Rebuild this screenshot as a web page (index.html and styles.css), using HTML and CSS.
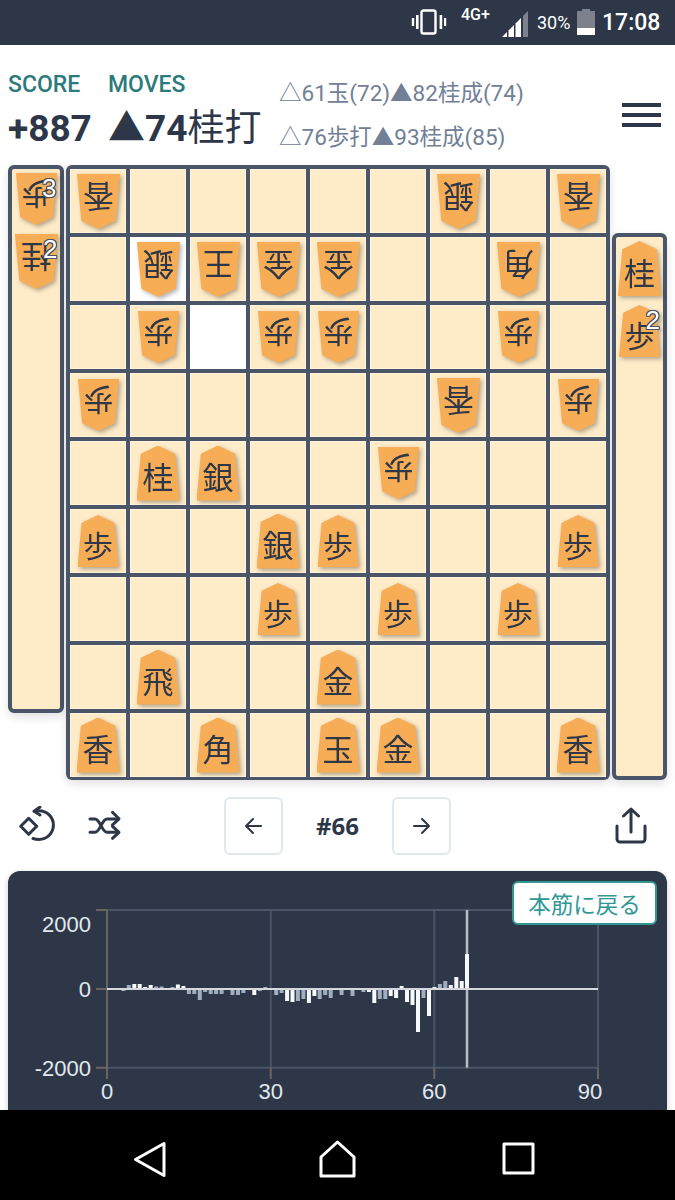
FILE: index.html
```html
<!DOCTYPE html>
<html>
  <head>
    <title>Shogi</title>
    <link rel="stylesheet" href="styles.css">
  </head>
  <body>
    <div class="status-bar">
      <svg class="status-vibrate" width="36" height="26" viewBox="0 0 36 26">
        <rect x="10.5" y="1.5" width="14" height="23" rx="2" fill="none" stroke="#fff" stroke-width="2.4"/>
        <rect x="5" y="6" width="2.6" height="14" fill="#fff"/>
        <rect x="0.8" y="9" width="2.4" height="8" fill="#fff"/>
        <rect x="28.6" y="6" width="2.6" height="14" fill="#fff"/>
        <rect x="33" y="9" width="2.2" height="8" fill="#fff"/>
      </svg>
      <span class="status-net">4G+</span>
      <svg class="status-signal" width="26" height="27" viewBox="0 0 26 27">
        <polygon points="0,27 5,27 5,22" fill="#fff"/>
        <polygon points="6.5,27 12,27 12,15 6.5,20.5" fill="#fff"/>
        <polygon points="13.5,27 19,27 19,8 13.5,13.5" fill="#fff"/>
        <polygon points="21,27 26,27 26,1 21,6" fill="#7c818d"/>
      </svg>
      <span class="status-battery-text">30%</span>
      <svg class="status-battery" width="18" height="26" viewBox="0 0 18 26">
        <rect x="5" y="0" width="8" height="3" fill="#7c818d"/>
        <rect x="0" y="2" width="18" height="17" fill="#7c818d"/>
        <rect x="0" y="19" width="18" height="7" fill="#fff"/>
      </svg>
      <span class="status-time">17:08</span>
    </div>

    <div class="main">
      <div class="header">
        <div class="score-col">
          <div class="label">SCORE</div>
          <div class="value">+887</div>
        </div>
        <div class="move-col">
          <div class="label">MOVES</div>
          <div class="value">▲74<span class="kanji">桂打</span></div>
        </div>
        <div class="lines">
          <div>△61玉(72)▲82桂成(74)</div>
          <div>△76歩打▲93桂成(85)</div>
        </div>
        <div class="menu">
          <div class="menu-bar"></div>
          <div class="menu-bar"></div>
          <div class="menu-bar"></div>
        </div>
      </div>

      <div class="board-row">
        <div class="stand stand-left">
          <div class="piece gote small"><span>歩</span><b class="count">3</b></div>
          <div class="piece gote"><span>桂</span><b class="count">2</b></div>
        </div>

        <div class="board">
          <div class="cell"><div class="piece gote"><span>香</span></div></div><div class="cell"></div><div class="cell"></div><div class="cell"></div><div class="cell"></div><div class="cell"></div><div class="cell"><div class="piece gote"><span>銀</span></div></div><div class="cell"></div><div class="cell"><div class="piece gote"><span>香</span></div></div>

          <div class="cell"></div><div class="cell white"><div class="piece gote"><span>銀</span></div></div><div class="cell"><div class="piece gote"><span>王</span></div></div><div class="cell"><div class="piece gote"><span>金</span></div></div><div class="cell"><div class="piece gote"><span>金</span></div></div><div class="cell"></div><div class="cell"></div><div class="cell"><div class="piece gote"><span>角</span></div></div><div class="cell"></div>

          <div class="cell"></div><div class="cell"><div class="piece gote small"><span>歩</span></div></div><div class="cell white"></div><div class="cell"><div class="piece gote small"><span>歩</span></div></div><div class="cell"><div class="piece gote small"><span>歩</span></div></div><div class="cell"></div><div class="cell"></div><div class="cell"><div class="piece gote small"><span>歩</span></div></div><div class="cell"></div>

          <div class="cell"><div class="piece gote small"><span>歩</span></div></div><div class="cell"></div><div class="cell"></div><div class="cell"></div><div class="cell"></div><div class="cell"></div><div class="cell"><div class="piece gote"><span>香</span></div></div><div class="cell"></div><div class="cell"><div class="piece gote small"><span>歩</span></div></div>

          <div class="cell"></div><div class="cell"><div class="piece"><span>桂</span></div></div><div class="cell"><div class="piece"><span>銀</span></div></div><div class="cell"></div><div class="cell"></div><div class="cell"><div class="piece gote small"><span>歩</span></div></div><div class="cell"></div><div class="cell"></div><div class="cell"></div>

          <div class="cell"><div class="piece small"><span>歩</span></div></div><div class="cell"></div><div class="cell"></div><div class="cell"><div class="piece"><span>銀</span></div></div><div class="cell"><div class="piece small"><span>歩</span></div></div><div class="cell"></div><div class="cell"></div><div class="cell"></div><div class="cell"><div class="piece small"><span>歩</span></div></div>

          <div class="cell"></div><div class="cell"></div><div class="cell"></div><div class="cell"><div class="piece small"><span>歩</span></div></div><div class="cell"></div><div class="cell"><div class="piece small"><span>歩</span></div></div><div class="cell"></div><div class="cell"><div class="piece small"><span>歩</span></div></div><div class="cell"></div>

          <div class="cell"></div><div class="cell"><div class="piece"><span>飛</span></div></div><div class="cell"></div><div class="cell"></div><div class="cell"><div class="piece"><span>金</span></div></div><div class="cell"></div><div class="cell"></div><div class="cell"></div><div class="cell"></div>

          <div class="cell"><div class="piece"><span>香</span></div></div><div class="cell"></div><div class="cell"><div class="piece"><span>角</span></div></div><div class="cell"></div><div class="cell"><div class="piece"><span>玉</span></div></div><div class="cell"><div class="piece"><span>金</span></div></div><div class="cell"></div><div class="cell"></div><div class="cell"><div class="piece"><span>香</span></div></div>
        </div>

        <div class="stand stand-right">
          <div class="piece"><span>桂</span></div>
          <div class="piece small"><span>歩</span><b class="count">2</b></div>
        </div>
      </div>

      <div class="toolbar">
        <div class="tool-left">
          <svg width="40" height="40" viewBox="0 0 40 40" fill="none" stroke="#2d3748" stroke-width="3" stroke-linecap="round" stroke-linejoin="round">
            <path d="M10.7 12.3l8 8-8 8-8-8z"/>
            <path d="M18 5c1-.2 2-.3 3-.3a14.4 14.4 0 0 1 0 28.8c-2 0-4-.3-6-1"/>
            <path d="M22 1l-6 4.300 6 3.700"/>
          </svg>
          <svg width="40" height="40" viewBox="0 0 40 40" fill="none" stroke="#2d3748" stroke-width="3" stroke-linecap="round" stroke-linejoin="round">
            <path d="M5 13h5c5 0 7 13.300 12 13.300h11"/>
            <path d="M5 26.300h5c5 0 7-13.300 12-13.300h11"/>
            <path d="M27.500 6.300l6.500 6.500-6.500 6"/>
            <path d="M27.500 20.300l6.500 6-6.500 6"/>
          </svg>
        </div>
        <div class="tool-center">
          <div class="nav-button">
            <svg width="20" height="20" viewBox="0 0 20 20" fill="none" stroke="#2d3748" stroke-width="2" stroke-linecap="round" stroke-linejoin="round">
              <path d="M17 10H2M9 3l-7 7 7 7"/>
            </svg>
          </div>
          <div class="move-number">#66</div>
          <div class="nav-button">
            <svg width="20" height="20" viewBox="0 0 20 20" fill="none" stroke="#2d3748" stroke-width="2" stroke-linecap="round" stroke-linejoin="round">
              <path d="M2 10h15M10 3l7 7-7 7"/>
            </svg>
          </div>
        </div>
        <svg class="tool-share" width="32" height="38" viewBox="0 0 32 38" fill="none" stroke="#2d3748" stroke-width="3" stroke-linecap="round" stroke-linejoin="round">
          <path d="M16 25V2M8.500 9L16 2l7.500 7"/>
          <path d="M2 19v13a3 3 0 0 0 3 3h22a3 3 0 0 0 3-3V19"/>
        </svg>
      </div>

      <div class="chart-card">
        <svg class="chart" width="659" height="240" viewBox="8 871 659 240">
          <!-- grid -->
          <path class="grid" d="M107 910H598M107 1067.700H598M270.700 910V1067.700M434.300 910V1067.700M598 910V1067.700"/>
          <path class="tick" d="M107 910V1079M96 910H107M96 989H107M96 1067.700H107M270.700 1067.700V1079M434.300 1067.700V1079M598 1067.700V1079"/>
          <path class="cursor-line" d="M467 910V1067.700"/>

          <!-- gray bars -->
          <g class="bar-gray">
            <rect x="121.400" y="989" width="4" height="2"/>
            <rect x="126.800" y="985" width="4" height="4"/>
            <rect x="154.100" y="986.500" width="4" height="2.500"/>
            <rect x="159.600" y="986.500" width="4" height="2.500"/>
            <rect x="170.500" y="987" width="4" height="2"/>
            <rect x="186.900" y="989" width="4" height="5"/>
            <rect x="192.300" y="989" width="4" height="5"/>
            <rect x="197.800" y="989" width="4" height="11"/>
            <rect x="203.200" y="989" width="4" height="3"/>
            <rect x="208.700" y="989" width="4" height="5"/>
            <rect x="214.100" y="989" width="4" height="5"/>
            <rect x="219.600" y="989" width="4" height="5"/>
            <rect x="225.100" y="988" width="4" height="1"/>
            <rect x="230.500" y="989" width="4" height="6"/>
            <rect x="236" y="989" width="4" height="6"/>
            <rect x="241.400" y="989" width="4" height="4"/>
            <rect x="257.800" y="989" width="4" height="2"/>
            <rect x="263.300" y="987" width="4" height="2"/>
            <rect x="274.200" y="989" width="4" height="6"/>
            <rect x="279.600" y="989" width="4" height="4"/>
            <rect x="295.900" y="989" width="4" height="12"/>
            <rect x="301.400" y="989" width="4" height="10"/>
            <rect x="317.700" y="989" width="4" height="10"/>
            <rect x="323.200" y="989" width="4" height="6"/>
            <rect x="328.700" y="989" width="4" height="9"/>
            <rect x="339.600" y="989" width="4" height="6"/>
            <rect x="350.500" y="989" width="4" height="7"/>
            <rect x="361.400" y="989" width="4" height="3"/>
            <rect x="377.800" y="989" width="4" height="10"/>
            <rect x="383.300" y="989" width="4" height="10"/>
            <rect x="421.500" y="989" width="4" height="9"/>
            <rect x="437.900" y="984" width="4" height="5"/>
            <rect x="443.300" y="981" width="4" height="8"/>
          </g>

          <!-- white bars -->
          <g class="bar-white">
            <rect x="132.300" y="984" width="4" height="5"/>
            <rect x="137.700" y="984" width="4" height="5"/>
            <rect x="143.200" y="987" width="4" height="2"/>
            <rect x="148.700" y="985" width="4" height="4"/>
            <rect x="175.900" y="984.500" width="4" height="4.500"/>
            <rect x="181.400" y="986" width="4" height="3"/>
            <rect x="252.300" y="989" width="4" height="6"/>
            <rect x="285.100" y="989" width="4" height="12"/>
            <rect x="290.500" y="989" width="4" height="13"/>
            <rect x="306.900" y="989" width="4" height="14"/>
            <rect x="312.400" y="989" width="4" height="7"/>
            <rect x="366.900" y="989" width="4" height="3"/>
            <rect x="372.300" y="989" width="4" height="14"/>
            <rect x="388.700" y="989" width="4" height="7"/>
            <rect x="394.100" y="989" width="4" height="9"/>
            <rect x="399.600" y="986" width="4" height="3"/>
            <rect x="405" y="989" width="4" height="13"/>
            <rect x="410.500" y="989" width="4" height="16"/>
            <rect x="416" y="989" width="4" height="43"/>
            <rect x="427" y="989" width="4" height="27"/>
            <rect x="432.400" y="987" width="4" height="2"/>
            <rect x="448.800" y="985" width="4" height="4"/>
            <rect x="454.300" y="977" width="4" height="12"/>
            <rect x="459.700" y="981" width="4" height="8"/>
            <rect x="465" y="954" width="4" height="35"/>
          </g>

          <path class="zero-line" d="M107 989H598"/>

          <text class="axis-text" x="91" y="932" text-anchor="end">2000</text>
          <text class="axis-text" x="91" y="997" text-anchor="end">0</text>
          <text class="axis-text" x="91" y="1076" text-anchor="end">-2000</text>
          <text class="axis-text" x="107" y="1099" text-anchor="middle">0</text>
          <text class="axis-text" x="270.700" y="1099" text-anchor="middle">30</text>
          <text class="axis-text" x="434.300" y="1099" text-anchor="middle">60</text>
          <text class="axis-text" x="590" y="1099" text-anchor="middle">90</text>
        </svg>
        <div class="back-button">本筋に戻る</div>
      </div>
    </div>

    <div class="nav-bar">
      <svg class="nav-back" width="33" height="37" viewBox="0 0 33 37" fill="none" stroke="#fff" stroke-width="3" stroke-linejoin="round">
        <path d="M2.500 18.500L31 2.500v32z"/>
      </svg>
      <svg class="nav-home" width="39" height="38" viewBox="0 0 39 38" fill="none" stroke="#fff" stroke-width="3" stroke-linejoin="round">
        <path d="M19.500 2L36 17v19H3V17z"/>
      </svg>
      <svg class="nav-square" width="33" height="33" viewBox="0 0 33 33" fill="none" stroke="#fff" stroke-width="3" stroke-linejoin="round">
        <rect x="2" y="2" width="29" height="29"/>
      </svg>
    </div>
  </body>
</html>
```

FILE: styles.css
```css
* {
  box-sizing: border-box;
}

body {
  margin: 0;
  width: 675px;
  height: 1200px;
  overflow: hidden;
  display: flex;
  flex-direction: column;
  background-color: white;
  color: #2d3748;
  font-family: Roboto, "Noto Sans CJK JP", sans-serif;
}

.status-bar {
  height: 45px;
  flex-shrink: 0;
  display: flex;
  align-items: center;
  background-color: #2d3748;
  color: white;
  padding-left: 411px;
}

.status-vibrate {
  margin-top: -1px;
}

.status-net {
  margin-left: 14px;
  margin-top: -16px;
  width: 41px;
  font-size: 16px;
  font-weight: 500;
}

.status-signal {
  margin-top: 2px;
}

.status-battery-text {
  margin-left: 9px;
  width: 40px;
  font-size: 18px;
}

.status-battery {
  margin-top: -1px;
}

.status-time {
  margin-left: 7px;
  font-size: 23px;
  font-weight: 500;
}

.main {
  flex: 1;
  min-height: 0;
  overflow: hidden;
}

.header {
  height: 120px;
  display: flex;
  padding: 28px 14px 0 8px;
}

.score-col {
  width: 100px;
}

.move-col {
  width: 172px;
}

.label {
  height: 24px;
  line-height: 24px;
  font-size: 23px;
  font-weight: 500;
  color: #2c7a7b;
}

.value {
  margin-top: 10px;
  height: 44px;
  line-height: 44px;
  font-size: 37px;
  font-weight: 700;
  white-space: nowrap;
}

.kanji {
  font-weight: 400;
}

.lines {
  margin-top: -2px;
  margin-left: -1px;
  font-size: 22.5px;
  line-height: 44px;
  color: #718096;
  white-space: nowrap;
}

.menu {
  margin-left: auto;
  margin-top: 30px;
  width: 39px;
  display: flex;
  flex-direction: column;
  gap: 6px;
}

.menu-bar {
  height: 4px;
  background-color: #2d3748;
}

.board-row {
  display: flex;
  align-items: flex-start;
  padding-left: 8px;
}

.board {
  margin-left: 2px;
  width: 544px;
  height: 615px;
  display: grid;
  grid-template-columns: repeat(9, 56px);
  grid-template-rows: repeat(9, 64px);
  gap: 4px;
  padding: 4px 4px 3px;
  background-color: #4a5568;
  border-radius: 6px;
  box-shadow: 0 4px 10px rgba(0, 0, 0, 0.12);
}

.cell {
  display: flex;
  align-items: center;
  justify-content: center;
  background-color: #feebc8;
  box-shadow: inset 0 0 0 1px #fff3dc;
}

.cell.white {
  background-color: white;
  box-shadow: none;
}

.stand {
  display: flex;
  flex-direction: column;
  align-items: center;
  gap: 9px;
  padding-top: 4px;
  background-color: #feebc8;
  border: 4px solid #4a5568;
  border-radius: 6px;
  box-shadow: 0 4px 10px rgba(0, 0, 0, 0.12);
}

.stand-left {
  width: 56px;
  height: 548px;
}

.stand-right {
  margin-left: 2px;
  margin-top: 68px;
  width: 55px;
  height: 547px;
}

/* filter stays on the outer box so gote shadows also fall to the lower right */
.piece {
  position: relative;
  width: 43px;
  height: 55px;
  flex-shrink: 0;
  filter: drop-shadow(2px 2px 2px rgba(0, 0, 0, 0.3));
}

.piece.small {
  width: 41px;
  height: 52px;
}

.piece span {
  display: flex;
  align-items: center;
  justify-content: center;
  width: 100%;
  height: 100%;
  padding-top: 5px;
  background-color: #f6ad55;
  clip-path: polygon(50% 0, 90% 15%, 100% 100%, 0 100%, 10% 15%);
  font-family: "Noto Sans CJK JP", sans-serif;
  font-size: 31px;
  line-height: 1;
  color: #2d3748;
}

.piece.small span {
  font-size: 30px;
}

.piece.gote span {
  transform: rotate(180deg);
}

.count {
  position: absolute;
  top: 2px;
  right: 0;
  font-family: "Liberation Sans", sans-serif;
  font-size: 26px;
  font-weight: 400;
  line-height: 1;
  color: white;
  text-shadow: -1px 0 #4a5568, 1px 0 #4a5568, 0 -1px #4a5568, 0 1px #4a5568,
    -1px -1px #4a5568, 1px 1px #4a5568, -1px 1px #4a5568, 1px -1px #4a5568;
}

.toolbar {
  height: 91px;
  display: grid;
  grid-template-columns: 204px 229px 1fr;
  align-items: center;
  padding: 0 28px 0 18px;
}

.tool-left {
  display: flex;
  gap: 27px;
}

.tool-center {
  display: flex;
  align-items: center;
  justify-content: space-between;
  margin-left: 2px;
}

.nav-button {
  width: 59px;
  height: 58px;
  display: flex;
  align-items: center;
  justify-content: center;
  border: 2px solid #e2e8f0;
  border-radius: 6px;
}

.move-number {
  font-family: "Noto Sans", sans-serif;
  font-size: 24px;
  font-weight: 700;
}

.tool-share {
  justify-self: end;
}

.chart-card {
  position: relative;
  margin: 0 8px;
  height: 300px;
  background-color: #2d3748;
  border-radius: 12px;
  box-shadow: 0 2px 6px rgba(0, 0, 0, 0.2);
}

.chart {
  display: block;
}

.grid {
  fill: none;
  stroke: #4a5568;
  stroke-width: 2;
}

.tick {
  fill: none;
  stroke: #68665f;
  stroke-width: 2;
}

.bar-gray {
  fill: #a0aec0;
}

.bar-white {
  fill: #f7fafc;
}

.zero-line {
  fill: none;
  stroke: #d5d9df;
  stroke-width: 2;
}

.cursor-line {
  fill: none;
  stroke: #b8bec7;
  stroke-width: 2.5;
}

.axis-text {
  font-family: "Liberation Sans", sans-serif;
  font-size: 22px;
  fill: #e2e8f0;
}

.back-button {
  position: absolute;
  top: 10px;
  right: 10px;
  width: 145px;
  height: 44px;
  display: flex;
  align-items: center;
  justify-content: center;
  background-color: white;
  border: 2px solid #319795;
  border-radius: 6px;
  font-family: "Noto Sans CJK JP", sans-serif;
  font-size: 22.5px;
  color: #319795;
}

.nav-bar {
  height: 90px;
  flex-shrink: 0;
  display: flex;
  align-items: flex-start;
  background-color: black;
  padding: 31px 0 0 133px;
}

.nav-home {
  margin-left: 152px;
  margin-top: -1px;
}

.nav-square {
  margin-left: 145px;
  margin-top: 1px;
}
```
